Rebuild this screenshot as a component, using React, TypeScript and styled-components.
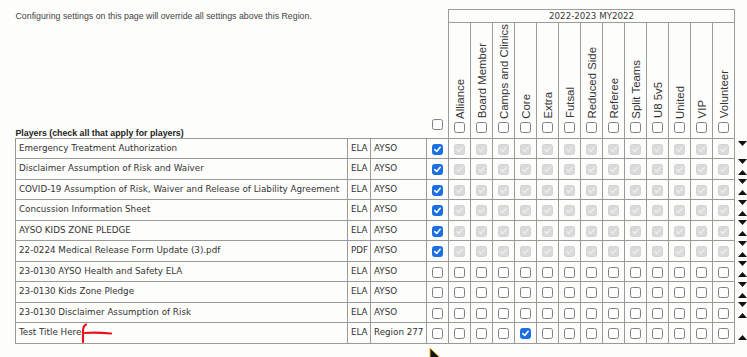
import React from 'react';
import styled, { createGlobalStyle } from 'styled-components';

const GlobalStyle = createGlobalStyle`
  html, body { margin: 0; padding: 0; background: #fdfdfc; }
  body { font-family: "DejaVu Sans", Verdana, sans-serif; color: #333; }
`;

const Page = styled.div`
  position: relative;
  box-sizing: border-box;
  width: 747px;
  height: 357px;
  overflow: hidden;
  padding: 9px 0 0 15px;
`;

const Grid = styled.table`
  border-collapse: collapse;
  table-layout: fixed;
  width: 732px;
`;

const IntroCell = styled.td`
  padding: 0;
  vertical-align: middle;
  font-family: "Liberation Sans", Arial, sans-serif;
  font-size: 8.8px;
  line-height: 10px;
  color: #444;
  white-space: nowrap;
`;

const GroupCell = styled.td`
  padding: 0;
  height: 12px;
  border: 1px solid #9c9c9c;
  text-align: center;
  font-size: 8.7px;
  line-height: 11px;
  color: #3a3a3a;
`;

const PlayersCell = styled.td`
  padding: 0;
  vertical-align: bottom;
  font-family: "Liberation Sans", Arial, sans-serif;
  font-weight: bold;
  font-size: 8.8px;
  line-height: 10px;
  color: #222;
  white-space: nowrap;
`;

const MasterCell = styled.td`
  padding: 0 0 5px 0;
  vertical-align: bottom;
  text-align: center;
  height: 110px;
`;

const LabelCell = styled.td`
  padding: 0 0 5px 0;
  vertical-align: bottom;
  border-left: 1px solid #9c9c9c;
  border-right: 1px solid #9c9c9c;
`;

const LabelStack = styled.div`
  display: flex;
  flex-direction: column;
  align-items: center;
  justify-content: flex-end;
  gap: 3px;
`;

const VerticalLabel = styled.span`
  writing-mode: vertical-rl;
  transform: rotate(180deg);
  font-family: "Liberation Sans", Arial, sans-serif;
  font-size: 11.4px;
  line-height: 12px;
  color: #333;
  white-space: nowrap;
`;

const Row = styled.tr`
  height: 20.5px;
`;

const TextCell = styled.td<{ $pad?: number }>`
  padding: 0 0 0 ${p => p.$pad ?? 3}px;
  border: 1px solid #9a9a9a;
  font-size: 8.75px;
  line-height: 11px;
  color: #333;
  white-space: nowrap;
  overflow: visible;
  vertical-align: middle;
`;

const BoxCell = styled.td`
  padding: 0;
  border: 1px solid #9a9a9a;
  text-align: center;
  vertical-align: middle;
`;

const ArrowCell = styled.td`
  padding: 0 0 0 3px;
  border: none;
  vertical-align: top;
`;

const ArrowStack = styled.div<{ $top: number }>`
  display: flex;
  flex-direction: column;
  gap: 6px;
  padding-top: ${p => p.$top}px;
`;

type BoxState = 'off' | 'on' | 'locked';

const BoxFrame = styled.span<{ $state: BoxState }>`
  display: inline-flex;
  align-items: center;
  justify-content: center;
  box-sizing: border-box;
  width: 11px;
  height: 11px;
  border-radius: 2.5px;
  vertical-align: middle;
  border: 1px solid
    ${p => (p.$state === 'on' ? '#1b6fe3' : p.$state === 'locked' ? '#d3d3d3' : '#808080')};
  background: ${p => (p.$state === 'on' ? '#1b6fe3' : p.$state === 'locked' ? '#dadada' : '#fff')};
  svg { display: block; }
`;

const MarkAnchor = styled.span`
  display: inline-block;
  position: relative;
  width: 0;
  height: 0;
  vertical-align: middle;
  svg { position: absolute; left: 0; top: -10px; overflow: visible; }
`;

const Cursor = styled.svg`
  position: absolute;
  left: 429px;
  top: 347px;
`;

const Check: React.FC<{ state?: BoxState }> = ({ state = 'off' }) => (
  <BoxFrame $state={state}>
    {state !== 'off' && (
      <svg width="9" height="9" viewBox="0 0 9 9">
        <path
          d="M1.8 4.6 L3.7 6.5 L7.2 2.3"
          fill="none"
          stroke={state === 'on' ? '#fff' : '#efefef'}
          strokeWidth={state === 'on' ? 1.6 : 1.2}
          strokeLinecap="round"
          strokeLinejoin="round"
        />
      </svg>
    )}
  </BoxFrame>
);

const Down = () => (
  <svg width="9" height="5" viewBox="0 0 9 5">
    <polygon points="0,0 9,0 4.5,5" fill="#111" />
  </svg>
);
const Up = () => (
  <svg width="9" height="5" viewBox="0 0 9 5">
    <polygon points="0,5 9,5 4.5,0" fill="#111" />
  </svg>
);

const labels = [
  'Alliance', 'Board Member', 'Camps and Clinics', 'Core', 'Extra', 'Futsal',
  'Reduced Side', 'Referee', 'Split Teams', 'U8 5v5', 'United', 'VIP', 'Volunteer',
];

type Doc = { title: string; type: string; owner: string; master: BoxState; cols: BoxState[]; mark?: boolean };

const locked = Array(13).fill('locked') as BoxState[];
const empty = Array(13).fill('off') as BoxState[];

const docs: Doc[] = [
  { title: 'Emergency Treatment Authorization', type: 'ELA', owner: 'AYSO', master: 'on', cols: locked },
  { title: 'Disclaimer Assumption of Risk and Waiver', type: 'ELA', owner: 'AYSO', master: 'on', cols: locked },
  { title: 'COVID-19 Assumption of Risk, Waiver and Release of Liability Agreement', type: 'ELA', owner: 'AYSO', master: 'on', cols: locked },
  { title: 'Concussion Information Sheet', type: 'ELA', owner: 'AYSO', master: 'on', cols: locked },
  { title: 'AYSO KIDS ZONE PLEDGE', type: 'ELA', owner: 'AYSO', master: 'on', cols: locked },
  { title: '22-0224 Medical Release Form Update (3).pdf', type: 'PDF', owner: 'AYSO', master: 'on', cols: locked },
  { title: '23-0130 AYSO Health and Safety ELA', type: 'ELA', owner: 'AYSO', master: 'off', cols: empty },
  { title: '23-0130 Kids Zone Pledge', type: 'ELA', owner: 'AYSO', master: 'off', cols: empty },
  { title: '23-0130 Disclaimer Assumption of Risk', type: 'ELA', owner: 'AYSO', master: 'off', cols: empty },
  {
    title: 'Test Title Here', type: 'ELA', owner: 'Region 277', master: 'off', mark: true,
    cols: empty.map((s, i) => (i === 3 ? 'on' : s)),
  },
];

export default function App() {
  return (
    <>
      <GlobalStyle />
      <Page>
        <Grid>
          <colgroup>
            <col style={{ width: 332 }} />
            <col style={{ width: 23 }} />
            <col style={{ width: 56 }} />
            <col style={{ width: 22 }} />
            {labels.map(l => (
              <col key={l} style={{ width: 22 }} />
            ))}
            <col style={{ width: 13 }} />
          </colgroup>
          <thead>
            <tr>
              <IntroCell colSpan={4}>
                Configuring settings on this page will override all settings above this Region.
              </IntroCell>
              <GroupCell colSpan={13}>2022-2023 MY2022</GroupCell>
              <td />
            </tr>
            <tr>
              <PlayersCell colSpan={3}>Players (check all that apply for players)</PlayersCell>
              <MasterCell>
                <Check />
              </MasterCell>
              {labels.map(l => (
                <LabelCell key={l}>
                  <LabelStack>
                    <VerticalLabel>{l}</VerticalLabel>
                    <Check />
                  </LabelStack>
                </LabelCell>
              ))}
              <td />
            </tr>
          </thead>
          <tbody>
            {docs.map((d, i) => {
              const first = i === 0;
              const last = i === docs.length - 1;
              return (
                <Row key={d.title}>
                  <TextCell>
                    {d.title}
                    {d.mark && (
                      <MarkAnchor>
                        <svg width="32" height="20" viewBox="0 0 32 20">
                          <path
                            d="M5 1.5 Q2 3 2 8 L2 19"
                            fill="none"
                            stroke="#e3141b"
                            strokeWidth="2.2"
                            strokeLinecap="round"
                          />
                          <path
                            d="M4 10 Q14 9 30 10.5"
                            fill="none"
                            stroke="#e3141b"
                            strokeWidth="2.2"
                            strokeLinecap="round"
                          />
                        </svg>
                      </MarkAnchor>
                    )}
                  </TextCell>
                  <TextCell $pad={3}>{d.type}</TextCell>
                  <TextCell $pad={3}>{d.owner}</TextCell>
                  <BoxCell>
                    <Check state={d.master} />
                  </BoxCell>
                  {d.cols.map((s, j) => (
                    <BoxCell key={j}>
                      <Check state={s} />
                    </BoxCell>
                  ))}
                  <ArrowCell>
                    <ArrowStack $top={first ? 3 : last ? 12 : 0}>
                      {!last && <Down />}
                      {!first && <Up />}
                    </ArrowStack>
                  </ArrowCell>
                </Row>
              );
            })}
          </tbody>
        </Grid>
        <Cursor width="13" height="18" viewBox="0 0 13 18">
          <path
            d="M1 1 L1 15 L4.5 11.5 L7 17 L9 16 L6.6 10.6 L11 10.6 Z"
            fill="#111"
            stroke="#e9b20c"
            strokeWidth="1"
            strokeLinejoin="round"
          />
        </Cursor>
      </Page>
    </>
  );
}
